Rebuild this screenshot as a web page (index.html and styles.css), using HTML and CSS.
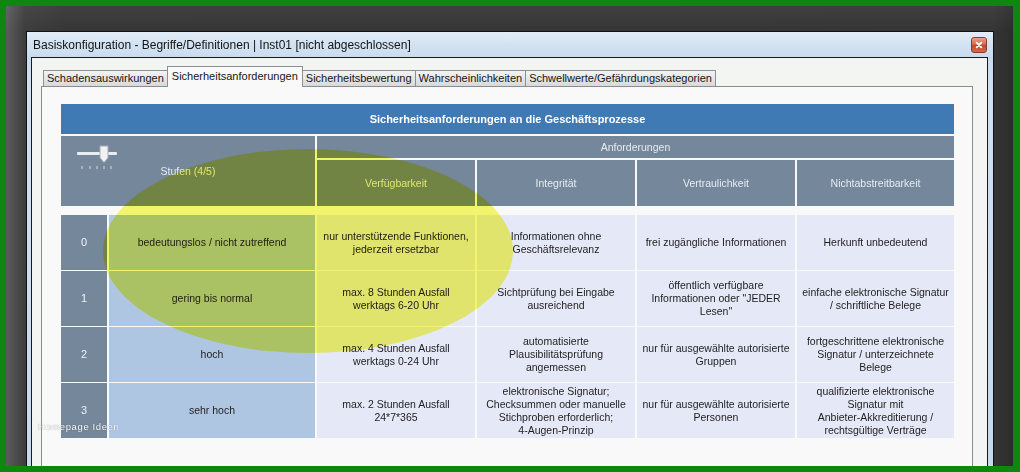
FILE: index.html
```html
<!DOCTYPE html>
<html lang="de">
<head>
<meta charset="utf-8">
<title>Basiskonfiguration</title>
<link rel="stylesheet" href="styles.css">
</head>
<body>
<div class="monitor">
  <div class="window">
    <div class="titlebar">
      <span class="title">Basiskonfiguration - Begriffe/Definitionen | Inst01 [nicht abgeschlossen]</span>
      <span class="close"><svg width="15" height="16" viewBox="0 0 15 16"><path d="M5 5.5 L10 10.5 M10 5.5 L5 10.5" stroke="#fff" stroke-width="2" stroke-linecap="round"/></svg></span>
    </div>
    <div class="client">
      <div class="tabs">
        <div class="tab">Schadensauswirkungen</div>
        <div class="tab active">Sicherheitsanforderungen</div>
        <div class="tab">Sicherheitsbewertung</div>
        <div class="tab">Wahrscheinlichkeiten</div>
        <div class="tab">Schwellwerte/Gefährdungskategorien</div>
      </div>
      <div class="panel">
        <div class="table">
          <div class="t-title">Sicherheitsanforderungen an die Geschäftsprozesse</div>
          <div class="t-head">
            <div class="h stufen">
              <svg class="slider" width="40" height="26" viewBox="0 0 40 26">
                <rect x="0" y="7" width="40" height="3" rx="1" fill="#e9eef3"/>
                <path d="M23 1 H31 V13 L27 17.5 L23 13 Z" fill="#f2f2f2" stroke="#a3adb7" stroke-width="1"/>
                <path d="M5 21v3M13 21v3M20 21v3M27 21v3M34 21v3" stroke="#d4dbe2" stroke-width="1"/>
              </svg>
              <span>Stufen (4/5)</span>
            </div>
            <div class="h anf">Anforderungen</div>
            <div class="h">Verfügbarkeit</div>
            <div class="h">Integrität</div>
            <div class="h">Vertraulichkeit</div>
            <div class="h">Nichtabstreitbarkeit</div>
          </div>
          <div class="t-body">
            <div class="c num">0</div>
            <div class="c desc">bedeutungslos / nicht zutreffend</div>
            <div class="c data">nur unterstützende Funktionen, jederzeit ersetzbar</div>
            <div class="c data">Informationen ohne<br>Geschäftsrelevanz</div>
            <div class="c data">frei zugängliche Informationen</div>
            <div class="c data">Herkunft unbedeutend</div>

            <div class="c num">1</div>
            <div class="c desc">gering bis normal</div>
            <div class="c data">max. 8 Stunden Ausfall<br>werktags 6-20 Uhr</div>
            <div class="c data">Sichtprüfung bei Eingabe<br>ausreichend</div>
            <div class="c data">öffentlich verfügbare<br>Informationen oder "JEDER<br>Lesen"</div>
            <div class="c data">einfache elektronische Signatur<br>/ schriftliche Belege</div>

            <div class="c num">2</div>
            <div class="c desc">hoch</div>
            <div class="c data">max. 4 Stunden Ausfall<br>werktags 0-24 Uhr</div>
            <div class="c data">automatisierte<br>Plausibilitätsprüfung<br>angemessen</div>
            <div class="c data">nur für ausgewählte autorisierte<br>Gruppen</div>
            <div class="c data">fortgeschrittene elektronische<br>Signatur / unterzeichnete<br>Belege</div>

            <div class="c num">3</div>
            <div class="c desc">sehr hoch</div>
            <div class="c data">max. 2 Stunden Ausfall<br>24*7*365</div>
            <div class="c data">elektronische Signatur;<br>Checksummen oder manuelle<br>Stichproben erforderlich;<br>4-Augen-Prinzip</div>
            <div class="c data">nur für ausgewählte autorisierte<br>Personen</div>
            <div class="c data">qualifizierte elektronische<br>Signatur mit<br>Anbieter-Akkreditierung /<br>rechtsgültige Verträge</div>
          </div>
        </div>
        <div class="highlight"></div>
      </div>
    </div>
  </div>
  <div class="watermark">Homepage Ideen</div>
</div>
</body>
</html>
```

FILE: styles.css
```css
html, body {
  margin: 0;
  padding: 0;
}

body {
  width: 1020px;
  height: 472px;
  overflow: hidden;
  background: #0e870e;
  font-family: "Liberation Sans", Arial, sans-serif;
  color: #1c1c1c;
}

.monitor {
  position: relative;
  box-sizing: border-box;
  margin: 6px 0 0 6px;
  width: 1007px;
  height: 460px;
  overflow: hidden;
  padding: 25px 19px 0 20px;
  background:
    linear-gradient(180deg, rgba(255,255,255,0.05) 0, rgba(0,0,0,0) 25px),
    linear-gradient(90deg, #5c5c5c 0, #3d3d3d 19px, #363636 60px, #353535 calc(100% - 20px), #2c2c2c 100%);
}

.window {
  box-sizing: border-box;
  height: 480px;
  border: 1px solid #121212;
  border-bottom: none;
  padding: 0 5px 0 4px;
  background: linear-gradient(180deg, #e3edf8 0, #d3e3f3 12px, #c9dcef 25px, #cfe0f1 60px, #c6d9ed 100%);
}

.titlebar {
  height: 25px;
  display: flex;
  align-items: center;
  justify-content: space-between;
}

.title {
  padding-left: 2px;
  font-size: 12px;
  color: #141414;
  white-space: nowrap;
}

.close {
  box-sizing: border-box;
  width: 16px;
  height: 16px;
  margin-right: 1px;
  margin-top: 1px;
  border: 1px solid #8c3b2a;
  border-radius: 3px;
  background: linear-gradient(180deg, #eba08d 0, #d9684c 45%, #c24a2e 55%, #d46a48 100%);
  display: flex;
  align-items: center;
  justify-content: center;
}

.close svg {
  display: block;
}

.client {
  box-sizing: border-box;
  height: 440px;
  border: 1px solid #1a1a1a;
  border-bottom: none;
  background: #f3f5f3;
  padding: 8px 0 0 9px;
}

.tabs {
  display: flex;
  align-items: flex-end;
  height: 20px;
  margin-left: 2px;
  position: relative;
  z-index: 1;
}

.tab {
  box-sizing: border-box;
  height: 16px;
  padding: 0 3px;
  border: 1px solid #8d9092;
  border-bottom: none;
  margin-left: -1px;
  background: linear-gradient(180deg, #f3f3f3 0, #e6e6e6 50%, #d9d9d9 100%);
  font-size: 11px;
  line-height: 15px;
  white-space: nowrap;
  color: #161616;
}

.tab:first-child {
  margin-left: 0;
}

.tab.active {
  height: 21px;
  margin-bottom: -1px;
  background: #f8f9f8;
  line-height: 18px;
  padding: 0 4px 2px;
}

.panel {
  position: relative;
  box-sizing: border-box;
  width: 932px;
  height: 420px;
  border: 1px solid #898c90;
  border-bottom: none;
  background: #f8f9f8;
  padding: 17px 0 0 19px;
}

.table {
  width: 893px;
}

.t-title {
  height: 30px;
  line-height: 30px;
  margin-bottom: 2px;
  background: #407ab4;
  color: #ffffff;
  font-weight: bold;
  font-size: 11px;
  text-align: center;
}

.t-head {
  display: grid;
  grid-template-columns: 46px 206px 158px 158px 158px 157px;
  grid-template-rows: 22px 46px;
  column-gap: 2px;
  row-gap: 2px;
}

.h {
  background: #74879b;
  color: #e6ecf2;
  font-size: 10.5px;
  display: flex;
  align-items: center;
  justify-content: center;
}

.stufen {
  position: relative;
  grid-column: 1 / 3;
  grid-row: 1 / 3;
}

.slider {
  position: absolute;
  left: 16px;
  top: 9px;
}

.anf {
  grid-column: 3 / 7;
}

.t-body {
  margin-top: 9px;
  display: grid;
  grid-template-columns: 46px 206px 158px 158px 158px 157px;
  grid-auto-rows: 55px;
  column-gap: 2px;
  row-gap: 1px;
}

.c {
  display: flex;
  align-items: center;
  justify-content: center;
  text-align: center;
  font-size: 10.5px;
  line-height: 13px;
  padding: 0 3px;
  color: #1e1e1e;
}

.num {
  background: #74879b;
  color: #eef2f6;
  font-size: 11px;
}

.desc {
  background: #afc6e3;
}

.data {
  background: #e5e8f6;
}

.highlight {
  position: absolute;
  left: 61px;
  top: 62px;
  width: 410px;
  height: 204px;
  border-radius: 50%;
  background: #fafa70;
  mix-blend-mode: multiply;
  pointer-events: none;
}

.watermark {
  position: absolute;
  left: 32px;
  top: 415px;
  font-size: 9.5px;
  letter-spacing: 0.6px;
  color: #ffffff;
  text-shadow: 0 0 1px rgba(0,0,0,0.5);
}
```
